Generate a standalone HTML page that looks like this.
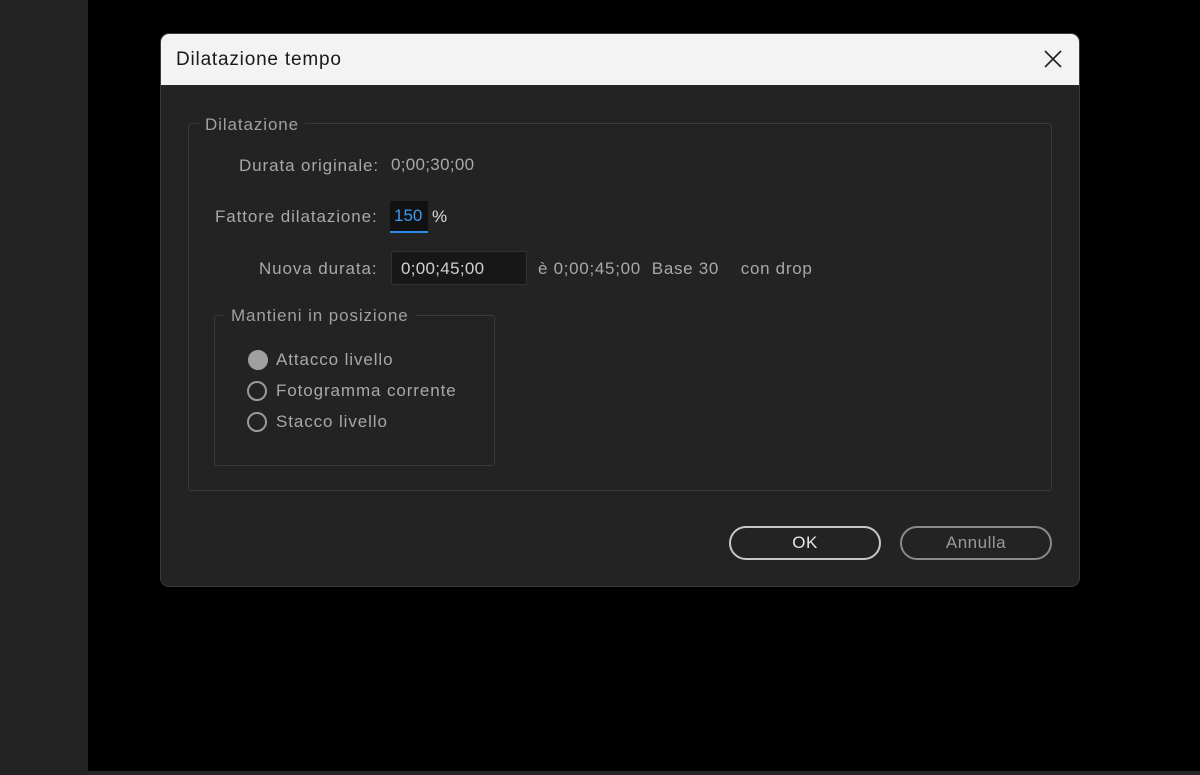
<!DOCTYPE html>
<html><head><meta charset="utf-8"><style>
body{margin:0;width:1200px;height:775px;background:#000;position:relative;overflow:hidden;font-family:"Liberation Sans",sans-serif;}
.lp{position:absolute;left:0;top:0;width:88px;height:775px;background:#232323;}
.bot{position:absolute;left:88px;top:771px;width:1112px;height:4px;background:#262626;}
.dlg{position:absolute;left:161px;top:34px;width:918px;height:552px;background:#232323;border-radius:8px;overflow:hidden;box-shadow:0 0 0 1px #3a3a3a;}
.tb{position:absolute;left:0;top:0;width:100%;height:51px;background:#f3f3f3;}
.tb span{position:absolute;left:15px;top:15px;font-size:19px;color:#1a1a1a;letter-spacing:0.8px;}
.x{position:absolute;right:16px;top:15px;}
.t{position:absolute;font-size:17px;color:#a8a8a8;white-space:nowrap;letter-spacing:0.9px;}
.fs{position:absolute;border:1px solid #3a3a3a;border-radius:3px;}
.leg{position:absolute;background:#232323;padding:0 6px;font-size:17px;color:#a0a0a0;letter-spacing:0.9px;}
.inp{position:absolute;left:230px;top:217px;width:134px;height:32px;background:#171717;border:1px solid #333;border-radius:2px;}
.rad{position:absolute;width:16px;height:16px;border:2px solid #9a9a9a;border-radius:50%;}
.btn{position:absolute;top:492px;width:148px;height:30px;border:2px solid #a8a8a8;border-radius:17px;text-align:center;line-height:30px;font-size:17px;letter-spacing:0.5px;}
</style></head><body>
<div class="lp"></div><div class="bot"></div>
<div class="dlg">
 <div class="tb"><span>Dilatazione tempo</span>
  <svg class="x" width="20" height="20" viewBox="0 0 20 20"><path d="M2 2L18 18M18 2L2 18" stroke="#222" stroke-width="1.6"/></svg></div>
 <div class="fs" style="left:27px;top:89px;width:862px;height:366px"></div>
 <div class="leg" style="left:38px;top:81px">Dilatazione</div>
 <div class="t" style="left:78px;top:122px">Durata originale:</div>
 <div class="t" style="left:230px;top:121px;letter-spacing:0.3px">0;00;30;00</div>
 <div class="t" style="left:54px;top:173px">Fattore dilatazione:</div>
 <div style="position:absolute;left:229px;top:167px;width:38px;height:30px;background:#111;border-bottom:2px solid #2d8ceb"></div>
 <div class="t" style="left:233px;top:172px;color:#3a9bf0;letter-spacing:0">150</div>
 <div class="t" style="left:271px;top:173px;color:#ddd">%</div>
 <div class="t" style="left:98px;top:225px">Nuova durata:</div>
 <div class="inp"></div>
 <div class="t" style="left:240px;top:225px;color:#d0d0d0;letter-spacing:0.3px">0;00;45;00</div>
 <div class="t" style="left:377px;top:225px;letter-spacing:0.7px">è 0;00;45;00&nbsp;&nbsp;Base 30&nbsp;&nbsp;&nbsp;&nbsp;con drop</div>
 <div class="fs" style="left:53px;top:281px;width:279px;height:149px"></div>
 <div class="leg" style="left:64px;top:272px">Mantieni in posizione</div>
 <div class="rad" style="left:87px;top:316px;background:#a0a0a0;border-color:#a0a0a0"></div>
 <div class="t" style="left:115px;top:316px">Attacco livello</div>
 <div class="rad" style="left:86px;top:347px"></div>
 <div class="t" style="left:115px;top:347px">Fotogramma corrente</div>
 <div class="rad" style="left:86px;top:378px"></div>
 <div class="t" style="left:115px;top:378px">Stacco livello</div>
 <div class="btn" style="left:568px;color:#e8e8e8;border-color:#c8c8c8">OK</div>
 <div class="btn" style="left:739px;color:#999;border-color:#8a8a8a">Annulla</div>
</div>
</body></html>
